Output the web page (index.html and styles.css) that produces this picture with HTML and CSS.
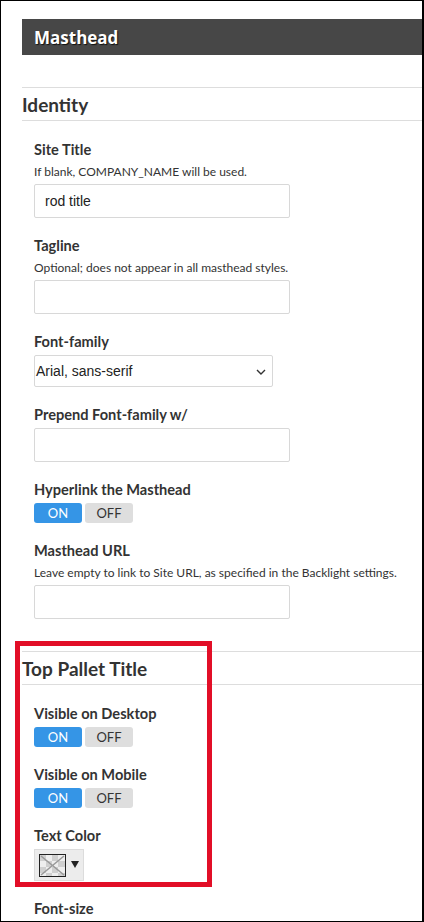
FILE: index.html
```html
<!DOCTYPE html>
<html lang="en">
<head>
<meta charset="utf-8">
<title>Masthead</title>
<link rel="stylesheet" href="styles.css">
</head>
<body>
<div class="frame">
  <div class="panel-head">Masthead</div>

  <section class="group">
    <h2 class="group-title">Identity</h2>
    <div class="fields">
      <div class="field">
        <div class="label">Site Title</div>
        <div class="help">If blank, COMPANY_NAME will be used.</div>
        <div class="input">rod title</div>
      </div>
      <div class="field">
        <div class="label">Tagline</div>
        <div class="help">Optional; does not appear in all masthead styles.</div>
        <div class="input"></div>
      </div>
      <div class="field">
        <div class="label">Font-family</div>
        <div class="select">
          <span>Arial, sans-serif</span>
          <svg class="chev" width="10" height="6" viewBox="0 0 10 6"><path d="M1 1l4 4 4-4" fill="none" stroke="#333" stroke-width="1.4"/></svg>
        </div>
      </div>
      <div class="field">
        <div class="label">Prepend Font-family w/</div>
        <div class="input"></div>
      </div>
      <div class="field">
        <div class="label">Hyperlink the Masthead</div>
        <div class="toggle"><span class="tg on">ON</span><span class="tg off">OFF</span></div>
      </div>
      <div class="field">
        <div class="label">Masthead URL</div>
        <div class="help">Leave empty to link to Site URL, as specified in the Backlight settings.</div>
        <div class="input"></div>
      </div>
    </div>
  </section>

  <section class="group">
    <h2 class="group-title">Top Pallet Title</h2>
    <div class="fields">
      <div class="field">
        <div class="label">Visible on Desktop</div>
        <div class="toggle"><span class="tg on">ON</span><span class="tg off">OFF</span></div>
      </div>
      <div class="field">
        <div class="label">Visible on Mobile</div>
        <div class="toggle"><span class="tg on">ON</span><span class="tg off">OFF</span></div>
      </div>
      <div class="field">
        <div class="label">Text Color</div>
        <div class="picker">
          <svg class="swatch" width="27" height="23" viewBox="0 0 27 23">
            <rect x="0" y="0" width="27" height="23" fill="#eeeeee"/>
            <rect x="1" y="1" width="6" height="6" fill="#cfcfcf"/>
            <rect x="13" y="1" width="6" height="6" fill="#cfcfcf"/>
            <rect x="7" y="7" width="6" height="6" fill="#cfcfcf"/>
            <rect x="19" y="7" width="7" height="6" fill="#cfcfcf"/>
            <rect x="1" y="13" width="6" height="6" fill="#cfcfcf"/>
            <rect x="13" y="13" width="6" height="6" fill="#cfcfcf"/>
            <rect x="7" y="19" width="6" height="3" fill="#cfcfcf"/>
            <rect x="19" y="19" width="7" height="3" fill="#cfcfcf"/>
            <path d="M2 2L25 21M25 2L2 21" stroke="#9a9a9a" stroke-width="1.6"/>
            <rect x="0.5" y="0.5" width="26" height="22" fill="none" stroke="#222" stroke-width="1"/>
          </svg>
          <svg class="caret" width="8" height="7" viewBox="0 0 8 7"><path d="M0 0h8L4 7z" fill="#222"/></svg>
        </div>
      </div>
      <div class="field">
        <div class="label">Font-size</div>
      </div>
    </div>
  </section>

  <div class="highlight"></div>
</div>
</body>
</html>
```

FILE: styles.css
```css
* { box-sizing: border-box; }
html, body { margin: 0; padding: 0; background: #fff; }
body {
  font-family: Lato, "Open Sans", Arial, sans-serif;
  color: #333;
}
.frame {
  position: relative;
  width: 424px;
  height: 922px;
  border: 1px solid #000;
  border-right-width: 2px;
  overflow: hidden;
  padding: 18px 0 0 21px;
}
.panel-head {
  height: 36px;
  background: #474747;
  color: #fff;
  font-family: "Open Sans", Arial, sans-serif;
  font-size: 17px;
  font-weight: 700;
  padding-left: 12px;
  display: flex;
  align-items: center;
  text-shadow: 1px 1px 1px #111;
}
.group { margin-top: 32px; }
.group-title {
  margin: 0;
  height: 34px;
  border-top: 1px solid #ddd;
  border-bottom: 1px solid #ddd;
  font-size: 19px;
  font-weight: 700;
  line-height: 33px;
  color: #333;
}
.fields {
  padding: 19px 0 0 12px;
}
.field { margin-bottom: 18px; }
.field:last-child { margin-bottom: 0; }
.label {
  font-size: 14.6px;
  font-weight: 700;
  line-height: 20px;
  margin-bottom: 3px;
}
.help {
  font-size: 12px;
  line-height: 17px;
  margin-bottom: 4px;
}
.input {
  width: 256px;
  height: 34px;
  border: 1px solid #d8d8d8;
  border-radius: 2px;
  font-family: "Liberation Sans", Arial, sans-serif;
  font-size: 14px;
  color: #222;
  padding: 0 10px;
  line-height: 32px;
}
.select {
  width: 239px;
  height: 32px;
  border: 1px solid #d8d8d8;
  border-radius: 2px;
  font-family: "Liberation Sans", Arial, sans-serif;
  font-size: 14px;
  color: #222;
  padding: 0 6px 0 1px;
  display: flex;
  align-items: center;
  justify-content: space-between;
}
.chev { margin-top: 1px; }
.toggle { display: flex; gap: 3px; }
.tg {
  width: 48px;
  height: 20px;
  border-radius: 3px;
  font-size: 13px;
  line-height: 20px;
  text-align: center;
}
.tg.on { background: #3595e6; color: #fff; }
.tg.off { background: #dedede; color: #333; }
.picker {
  width: 50px;
  height: 32px;
  background: #ececec;
  border: 1px solid #dcdcdc;
  display: flex;
  align-items: center;
  padding-left: 4px;
  gap: 5px;
}
.swatch { display: block; }
.caret { display: block; margin-top: -1px; }
.highlight {
  position: absolute;
  left: 14px;
  top: 640px;
  width: 197px;
  height: 246px;
  border: 5px solid #e20e27;
  pointer-events: none;
}
```
